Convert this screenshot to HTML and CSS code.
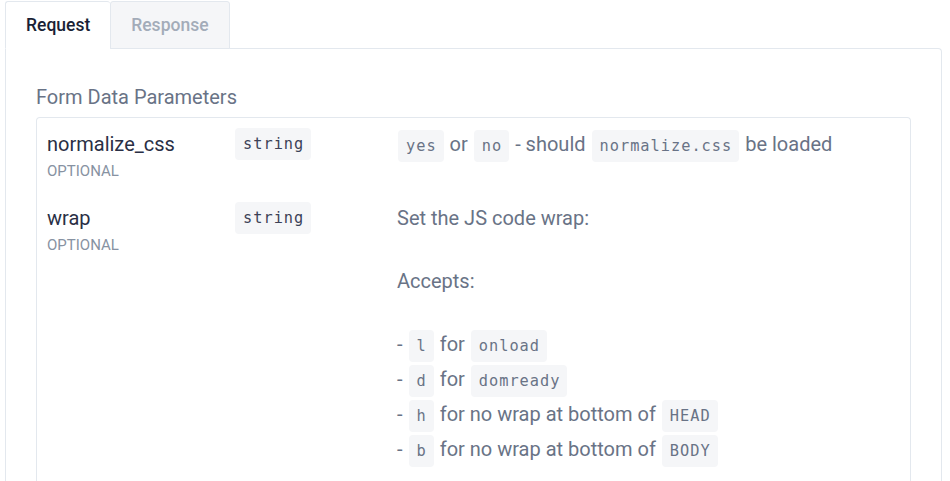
FILE: index.html
```html
<!DOCTYPE html>
<html>
<head>
<meta charset="utf-8">
<link rel="stylesheet" href="styles.css">
</head>
<body>
<div class="wrap">
  <div class="tabs">
    <div class="tab active">Request</div>
    <div class="tab">Response</div>
  </div>
  <div class="panel">
    <h3 class="heading">Form Data Parameters</h3>
    <div class="table">
      <div class="row">
        <div class="name-col">
          <div class="pname">normalize_css</div>
          <div class="opt">OPTIONAL</div>
        </div>
        <div class="type-col"><code class="code">string</code></div>
        <div class="desc-col">
          <p class="line"><code class="code">yes</code> or <code class="code">no</code> - should <code class="code">normalize.css</code> be loaded</p>
        </div>
      </div>
      <div class="row">
        <div class="name-col">
          <div class="pname">wrap</div>
          <div class="opt">OPTIONAL</div>
        </div>
        <div class="type-col"><code class="code">string</code></div>
        <div class="desc-col">
          <p class="line">Set the JS code wrap:</p>
          <p class="line para">Accepts:</p>
          <ul class="list">
            <li class="item">- <code class="code">l</code> for <code class="code">onload</code></li>
            <li class="item">- <code class="code">d</code> for <code class="code">domready</code></li>
            <li class="item">- <code class="code">h</code> for no wrap at bottom of <code class="code">HEAD</code></li>
            <li class="item">- <code class="code">b</code> for no wrap at bottom of <code class="code">BODY</code></li>
          </ul>
        </div>
      </div>
    </div>
  </div>
</div>
</body>
</html>
```

FILE: styles.css
```css
html, body {
  margin: 0;
  padding: 0;
  background: #ffffff;
}
body {
  font-family: Roboto, "Liberation Sans", sans-serif;
  color: #697386;
  overflow: hidden;
  height: 481px;
}
.wrap {
  padding: 1px 8px 0 5px;
  height: 481px;
  box-sizing: border-box;
  display: flex;
  flex-direction: column;
}
.tabs {
  display: flex;
  margin-bottom: -1px;
  position: relative;
  z-index: 1;
  flex: none;
}
.tab {
  height: 46px;
  line-height: 46px;
  padding: 0 20px;
  font-size: 17.5px;
  font-weight: 500;
  color: #a3acb9;
  background: #f5f6f8;
  border: 1px solid #e3e8ee;
  border-radius: 3px 3px 0 0;
}
.tab.active {
  color: #1a1f36;
  background: #ffffff;
  border-bottom-color: #ffffff;
  border-right: none;
}
.panel {
  flex: 1;
  min-height: 0;
  border: 1px solid #e3e8ee;
  border-bottom: none;
  border-top-right-radius: 4px;
  padding: 36px 30px 0 30px;
  display: flex;
  flex-direction: column;
}
.heading {
  margin: 0 0 8px 0;
  font-size: 20px;
  line-height: 24px;
  font-weight: 400;
  color: #697386;
  flex: none;
}
.table {
  flex: 1;
  min-height: 0;
  overflow: hidden;
  border: 1px solid #e3e8ee;
  border-bottom: none;
  border-radius: 4px 4px 0 0;
  padding: 10px 10px 0 10px;
  display: flex;
  flex-direction: column;
  gap: 20px;
}
.row {
  display: flex;
  align-items: flex-start;
  flex: none;
}
.name-col {
  width: 188px;
  flex: none;
}
.type-col {
  width: 162px;
  flex: none;
  height: 32px;
  display: flex;
  align-items: center;
}
.desc-col {
  flex: 1;
}
.pname {
  font-size: 20px;
  line-height: 32px;
  color: #2a2f45;
}
.opt {
  font-size: 15px;
  line-height: 22px;
  color: #8792a2;
}
.code {
  display: inline-block;
  vertical-align: middle;
  font-family: "DejaVu Sans Mono", "Liberation Mono", monospace;
  font-size: 15.3px;
  letter-spacing: 1px;
  line-height: 20px;
  padding: 6px 7px 6px 8px;
  margin: 0 1px;
  background: #f5f6f8;
  border-radius: 4px;
  color: #697386;
}
.type-col .code {
  color: #3c4257;
  margin: 0;
}
.line {
  margin: 0;
  font-size: 20px;
  line-height: 32px;
  color: #697386;
}
.para {
  margin-top: 31px;
}
.list {
  list-style: none;
  margin: 30px 0 0 0;
  padding: 0;
}
.item {
  font-size: 20px;
  height: 35px;
  line-height: 35px;
  color: #697386;
}
```
